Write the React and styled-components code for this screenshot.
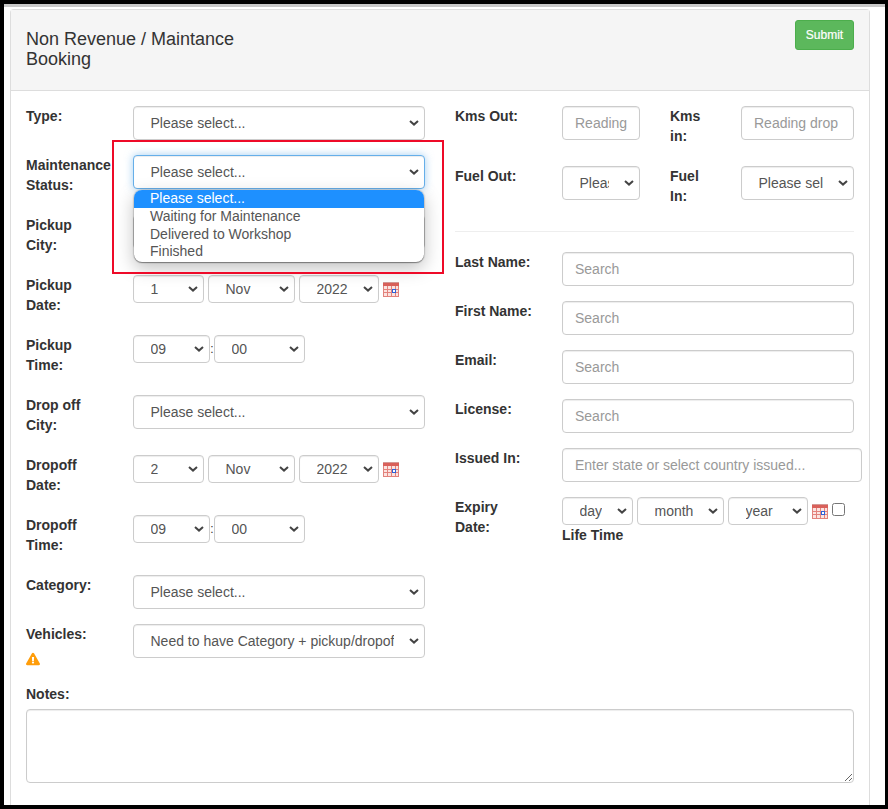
import React from "react";
import styled, { createGlobalStyle } from "styled-components";
import { FaExclamationTriangle } from "react-icons/fa";

const Global = createGlobalStyle`
  html, body { margin: 0; padding: 0; background: #000; }
  * { box-sizing: border-box; }
  body { font-family: "Liberation Sans", Arial, sans-serif; font-size: 14px; line-height: 20px; color: #333; }
`;

const chevron = `url("data:image/svg+xml,%3Csvg xmlns='http://www.w3.org/2000/svg' width='10' height='6' viewBox='0 0 10 6'%3E%3Cpath d='M1 1l4 3.6L9 1' fill='none' stroke='%23444' stroke-width='2'/%3E%3C/svg%3E")`;

const Frame = styled.div`
  position: relative;
  width: 888px;
  height: 809px;
  overflow: hidden;
  background: #fff;
  border: solid #000;
  border-width: 4px 3px 4px 4px;
`;
const TopRule = styled.div`
  height: 3px;
  background: #c8c8c8;
  margin-bottom: 2px;
`;
const Panel = styled.div`
  width: 860px;
  height: calc(100% - 5px);
  margin-left: 6px;
  border: 1px solid #ddd;
  border-bottom: 0;
  border-radius: 4px 4px 0 0;
`;
const Header = styled.div`
  display: flex;
  justify-content: space-between;
  align-items: flex-start;
  height: 81px;
  padding: 10px 15px 0;
  background: #f5f5f5;
  border-bottom: 1px solid #ddd;
`;
const Title = styled.h3`
  margin: 9px 0 0;
  width: 240px;
  font-size: 18px;
  font-weight: 400;
  line-height: 20px;
  color: #333;
`;
const SubmitButton = styled.button`
  width: 59px;
  height: 30px;
  padding: 0;
  border: 1px solid #4cae4c;
  border-radius: 3px;
  background: #5cb85c;
  color: #fff;
  font-family: inherit;
  font-size: 12px;
  font-weight: 400;
  line-height: 18px;
  -webkit-text-stroke: 0.2px #fff;
`;
const Body = styled.div`
  padding: 15px 15px 0;
`;
const Columns = styled.div`
  display: grid;
  grid-template-columns: 399px 399px;
  column-gap: 30px;
`;
const Row = styled.div`
  display: flex;
  align-items: flex-start;
  margin-bottom: 15px;
`;
const Label = styled.label`
  display: block;
  flex: none;
  width: ${(p) => p.$w || 107}px;
  margin-bottom: 5px;
  font-weight: 700;
  white-space: nowrap;
`;
const controlBase = `
  display: block;
  height: 34px;
  padding: 6px 12px;
  background-color: #fff;
  border: 1px solid #ccc;
  border-radius: 4px;
  box-shadow: inset 0 1px 1px rgba(0,0,0,.075);
  color: #555;
  font-family: inherit;
  font-size: 14px;
  line-height: 20px;
`;
const Select = styled.select`
  ${controlBase}
  appearance: none;
  flex: none;
  width: ${(p) => p.$w || 292}px;
  height: ${(p) => p.$h || 34}px;
  padding: 0 30px 0 16.5px;
  background-image: ${chevron};
  background-repeat: no-repeat;
  background-position: right 5px center;
  ${(p) => p.$focus && `border-color: #66afe9; box-shadow: inset 0 1px 1px rgba(0,0,0,.075), 0 0 8px rgba(102,175,233,.6);`}
`;
const Input = styled.input`
  ${controlBase}
  flex: none;
  width: ${(p) => p.$w || 292}px;
  &::placeholder { color: #999; opacity: 1; }
`;
const Gap = styled.div`
  flex: none;
  width: ${(p) => p.$w}px;
`;
const InlineGroup = styled.div`
  display: flex;
  align-items: center;
  gap: 4px;
`;
const Colon = styled.span`
  width: 4px;
  margin: 0 -4px;
  text-align: center;
  font-size: 12px;
  color: #333;
`;
const Stack = styled.div`
  display: flex;
  flex-direction: column;
`;
const LifeTime = styled.div`
  font-weight: 700;
`;
const Check = styled.input`
  flex: none;
  width: 13px;
  height: 13px;
  margin: 6px 0 3px -1px;
  align-self: flex-start;
`;
const Divider = styled.hr`
  margin: 20px 0;
  border: 0;
  border-top: 1px solid #eee;
`;
const SelectHolder = styled.div`
  position: relative;
  flex: none;
`;
const OpenList = styled.ul`
  position: absolute;
  left: 1px;
  top: 35px;
  width: 290px;
  height: 72px;
  margin: 0;
  padding: 0;
  list-style: none;
  background: #fff;
  border-radius: 8px;
  overflow: hidden;
  box-shadow: 0 1px 1px rgba(0,0,0,.35), 0 0 2px rgba(0,0,0,.4), 0 6px 18px rgba(0,0,0,.25);
  z-index: 3;
`;
const OpenOption = styled.li`
  height: 18px;
  padding-left: 16px;
  line-height: 17px;
  font-size: 14px;
  color: ${(p) => (p.$active ? "#fff" : "#555")};
  background: ${(p) => (p.$active ? "#1e90ff" : "transparent")};
  &:last-child { line-height: 15px; }
`;
const Annotation = styled.div`
  position: absolute;
  left: 108px;
  top: 136px;
  width: 332px;
  height: 134px;
  border: 2px solid #ee0a28;
  pointer-events: none;
  z-index: 4;
`;
const WarnIcon = styled(FaExclamationTriangle)`
  display: block;
  width: 14px;
  height: 14px;
  margin: 8px 0 -2px;
  color: #ff9d0a;
`;
const Notes = styled.textarea`
  ${controlBase}
  width: 100%;
  height: 74px;
`;
const NotesLabel = styled.label`
  display: block;
  margin-bottom: 5px;
  font-weight: 700;
`;
const CalendarSvg = styled.svg`
  flex: none;
  display: block;
`;

const Calendar = () => (
  <CalendarSvg width="17" height="15" viewBox="0 0 17 15">
    <rect x="0" y="2" width="16" height="13" fill="#fbe3e0" />
    <path d="M0.5 0.5h15" stroke="#a8322c" strokeDasharray="1 1" />
    <rect x="0" y="1" width="16" height="3" fill="#d9605a" />
    <path d="M0.5 4v11M4.5 4v11M8.5 4v11M12.5 4v11M15.5 4v11M0 7.5h16M0 10.5h16M0 14.5h16" stroke="#e2827c" />
    <rect x="9.5" y="7.5" width="3" height="3" fill="#fff" stroke="#2f62d8" />
  </CalendarSvg>
);

const Sel = ({ text, ...rest }) => (
  <Select {...rest}>
    <option>{text}</option>
  </Select>
);

const DateGroup = ({ d, m, y }) => (
  <InlineGroup>
    <Sel text={d} $w={71} $h={28} />
    <Sel text={m} $w={87} $h={28} />
    <Sel text={y} $w={80} $h={28} />
    <Calendar />
  </InlineGroup>
);

const TimeGroup = () => (
  <InlineGroup>
    <Sel text="09" $w={77} $h={28} />
    <Colon>:</Colon>
    <Sel text="00" $w={91} $h={28} />
  </InlineGroup>
);

export default function App() {
  return (
    <>
      <Global />
      <Frame>
        <TopRule />
        <Panel>
          <Header>
            <Title>Non Revenue / Maintance Booking</Title>
            <SubmitButton>Submit</SubmitButton>
          </Header>
          <Body>
            <Columns>
              <div>
                <Row>
                  <Label>Type:</Label>
                  <Sel text="Please select..." />
                </Row>
                <Row>
                  <Label>Maintenance<br />Status:</Label>
                  <SelectHolder>
                    <Sel text="Please select..." $focus />
                    <OpenList>
                      <OpenOption $active>Please select...</OpenOption>
                      <OpenOption>Waiting for Maintenance</OpenOption>
                      <OpenOption>Delivered to Workshop</OpenOption>
                      <OpenOption>Finished</OpenOption>
                    </OpenList>
                  </SelectHolder>
                </Row>
                <Row>
                  <Label>Pickup<br />City:</Label>
                  <Sel text="Please select..." />
                </Row>
                <Row>
                  <Label>Pickup<br />Date:</Label>
                  <DateGroup d="1" m="Nov" y="2022" />
                </Row>
                <Row>
                  <Label>Pickup<br />Time:</Label>
                  <TimeGroup />
                </Row>
                <Row>
                  <Label>Drop off<br />City:</Label>
                  <Sel text="Please select..." />
                </Row>
                <Row>
                  <Label>Dropoff<br />Date:</Label>
                  <DateGroup d="2" m="Nov" y="2022" />
                </Row>
                <Row>
                  <Label>Dropoff<br />Time:</Label>
                  <TimeGroup />
                </Row>
                <Row>
                  <Label>Category:</Label>
                  <Sel text="Please select..." />
                </Row>
                <Row>
                  <Label>Vehicles:<WarnIcon /></Label>
                  <Sel text="Need to have Category + pickup/dropoff" />
                </Row>
              </div>
              <div>
                <Row>
                  <Label>Kms Out:</Label>
                  <Input $w={78} placeholder="Reading" />
                  <Gap $w={30} />
                  <Label $w={71}>Kms<br />in:</Label>
                  <Input $w={113} placeholder="Reading drop" />
                </Row>
                <Row>
                  <Label>Fuel Out:</Label>
                  <Sel text="Please select..." $w={78} />
                  <Gap $w={30} />
                  <Label $w={71}>Fuel<br />In:</Label>
                  <Sel text="Please select..." $w={113} />
                </Row>
                <Divider />
                <Row>
                  <Label>Last Name:</Label>
                  <Input placeholder="Search" />
                </Row>
                <Row>
                  <Label>First Name:</Label>
                  <Input placeholder="Search" />
                </Row>
                <Row>
                  <Label>Email:</Label>
                  <Input placeholder="Search" />
                </Row>
                <Row>
                  <Label>License:</Label>
                  <Input placeholder="Search" />
                </Row>
                <Row>
                  <Label>Issued In:</Label>
                  <Input $w={300} placeholder="Enter state or select country issued..." />
                </Row>
                <Row>
                  <Label>Expiry<br />Date:</Label>
                  <Stack>
                    <InlineGroup>
                      <DateGroup d="day" m="month" y="year" />
                      <Check type="checkbox" />
                    </InlineGroup>
                    <LifeTime>Life Time</LifeTime>
                  </Stack>
                </Row>
              </div>
            </Columns>
            <NotesLabel>Notes:</NotesLabel>
            <Notes />
          </Body>
        </Panel>
        <Annotation />
      </Frame>
    </>
  );
}
